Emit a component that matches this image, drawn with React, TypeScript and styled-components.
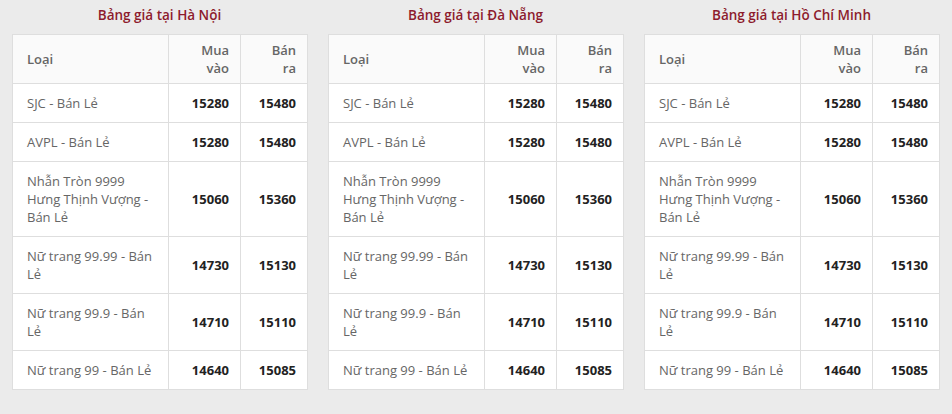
import React from "react";
import styled, { createGlobalStyle } from "styled-components";

const Global = createGlobalStyle`
  html, body { margin: 0; padding: 0; background: #ebebeb; }
  body { font-family: "Open Sans", "Liberation Sans", sans-serif; }
`;

const Page = styled.div`
  display: grid;
  grid-template-columns: repeat(3, 295px);
  column-gap: 21px;
  padding: 0 12px;
  width: 952px;
  height: 414px;
  box-sizing: border-box;
`;

const Column = styled.section`
  display: flex;
  flex-direction: column;
`;

const Title = styled.h3`
  margin: 0;
  height: 34px;
  line-height: 30px;
  text-align: center;
  font-size: 13.5px;
  font-weight: 600;
  color: #8d1b2d;
`;

const Table = styled.table`
  width: 295px;
  border-collapse: collapse;
  background: #fff;
  font-size: 13px;
  line-height: 18px;
  table-layout: fixed;
`;

const HeadCell = styled.th<{ $right?: boolean }>`
  border: 1px solid #dedede;
  background: #fafafa;
  color: #666;
  font-weight: 600;
  padding: 6px 11px 6px ${(p) => (p.$right ? "18px" : "14px")};
  text-align: ${(p) => (p.$right ? "right" : "left")};
  vertical-align: middle;
`;

const Cell = styled.td<{ $num?: boolean }>`
  border: 1px solid #dedede;
  padding: 10px 11px 10px 14px;
  color: ${(p) => (p.$num ? "#222" : "#666")};
  font-weight: ${(p) => (p.$num ? 700 : 400)};
  text-align: ${(p) => (p.$num ? "right" : "left")};
  vertical-align: middle;
`;

const rows: [string, number, number][] = [
  ["SJC - Bán Lẻ", 15280, 15480],
  ["AVPL - Bán Lẻ", 15280, 15480],
  ["Nhẫn Tròn 9999 Hưng Thịnh Vượng - Bán Lẻ", 15060, 15360],
  ["Nữ trang 99.99 - Bán Lẻ", 14730, 15130],
  ["Nữ trang 99.9 - Bán Lẻ", 14710, 15110],
  ["Nữ trang 99 - Bán Lẻ", 14640, 15085],
];

const cities = ["Hà Nội", "Đà Nẵng", "Hồ Chí Minh"];

function PriceTable({ city }: { city: string }) {
  return (
    <Column>
      <Title>Bảng giá tại {city}</Title>
      <Table>
        <colgroup>
          <col style={{ width: 156 }} />
          <col style={{ width: 72 }} />
          <col style={{ width: 67 }} />
        </colgroup>
        <thead>
          <tr>
            <HeadCell>Loại</HeadCell>
            <HeadCell $right>Mua vào</HeadCell>
            <HeadCell $right>Bán ra</HeadCell>
          </tr>
        </thead>
        <tbody>
          {rows.map(([name, buy, sell]) => (
            <tr key={name}>
              <Cell>{name}</Cell>
              <Cell $num>{buy}</Cell>
              <Cell $num>{sell}</Cell>
            </tr>
          ))}
        </tbody>
      </Table>
    </Column>
  );
}

export default function App() {
  return (
    <>
      <Global />
      <Page>
        {cities.map((c) => (
          <PriceTable key={c} city={c} />
        ))}
      </Page>
    </>
  );
}
